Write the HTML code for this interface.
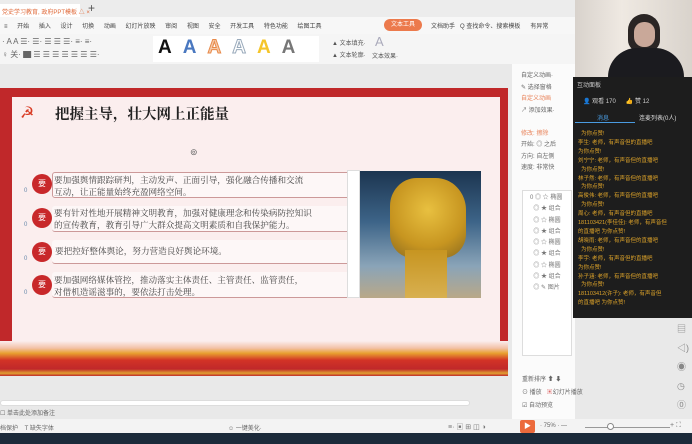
<!DOCTYPE html>
<html><head><meta charset="utf-8"><style>
*{margin:0;padding:0;box-sizing:border-box}
body{width:692px;height:444px;overflow:hidden;background:#e9e9e9;font-family:"Liberation Sans","Noto Sans CJK SC",sans-serif;position:relative;font-size:7px;color:#444}
.a{position:absolute}
.t{white-space:nowrap}
</style></head><body>
<!-- title bar -->
<div class="a" style="left:0;top:0;width:575px;height:17px;background:#ececec"></div>
<div class="a t" style="left:0;top:4px;color:#e06a3a;font-size:6px;background:#fff;width:80px;height:13px;padding:3px 2px">党史学习教育, 政府PPT模板 △ ×</div>
<div class="a t" style="left:88px;top:1px;font-size:12px;color:#555">+</div>
<!-- menu -->
<div class="a" style="left:0;top:17px;width:575px;height:17px;background:#f7f7f7"></div>
<div class="a t" style="left:4px;top:21px;font-size:6px;color:#444;word-spacing:8px">≡ 开始 插入 设计 切换 动画 幻灯片放映 审阅 视图 安全 开发工具 特色功能 绘图工具</div>
<div class="a t" style="left:384px;top:19px;width:38px;height:12px;border-radius:6px;background:#ec7a4c;color:#fff;font-size:6px;text-align:center;line-height:12px">文本工具</div>
<div class="a t" style="left:431px;top:21px;font-size:6px;color:#444">文档助手 &nbsp;&nbsp;Q 查找命令、搜索模板 &nbsp;&nbsp;&nbsp;&nbsp;&nbsp;有异常</div>
<!-- ribbon -->
<div class="a" style="left:0;top:34px;width:575px;height:30px;background:#f5f5f5"></div>
<div class="a t" style="left:2px;top:37px;font-size:8px;color:#666">· A A ☰· ☰· ☰ ☰ ☰· ≡· ≡·</div>
<div class="a t" style="left:2px;top:49px;font-size:8px;color:#666">♀ 关· ▇ ☰ ☰ ☰ ☰ ☰ ☰ ☰·</div>
<div class="a" style="left:153px;top:36px;width:166px;height:26px;background:#fff"></div>
<div class="a t" style="left:158px;top:37px;font-size:19px;font-weight:bold;letter-spacing:11px"><span style="color:#111">A</span><span style="color:#4a78c0">A</span><span style="color:#f5c9a8;-webkit-text-stroke:1px #e88a4a">A</span><span style="color:#fff;-webkit-text-stroke:1px #9ab">A</span><span style="color:#f5c52a">A</span><span style="color:#777">A</span></div>
<div class="a t" style="left:332px;top:38px;font-size:6px;color:#555;line-height:12px">▲ 文本填充·<br>▲ 文本轮廓·</div>
<div class="a t" style="left:375px;top:34px;font-size:13px;color:#aab">A</div>
<div class="a t" style="left:372px;top:51px;font-size:6px;color:#555">文本效果·</div>
<!-- right panel -->
<div class="a" style="left:512px;top:64px;width:63px;height:356px;background:#fbfbfb"></div>
<div class="a t" style="left:521px;top:71px;font-size:6px;color:#666;line-height:11.5px">自定义动画·<br>✎ 选择窗格<br><span style="color:#e8835a">自定义动画</span><br>↗ 添加效果·<br><br><span style="color:#e8835a">修改: 擦除</span><br>开始: ◎ 之后<br>方向: 自左侧<br>速度: 非常快</div>
<div class="a" style="left:522px;top:190px;width:50px;height:166px;background:#fff;border:1px solid #ddd"></div>
<div class="a t" style="left:530px;top:193px;font-size:6px;color:#777;line-height:11.3px">0 ◎ ☆ 椭圆<br>&nbsp; ◎ ★ 组合<br>&nbsp; ◎ ☆ 椭圆<br>&nbsp; ◎ ★ 组合<br>&nbsp; ◎ ☆ 椭圆<br>&nbsp; ◎ ★ 组合<br>&nbsp; ◎ ☆ 椭圆<br>&nbsp; ◎ ★ 组合<br>&nbsp; ◎ ✎ 图片</div>
<div class="a t" style="left:522px;top:374px;font-size:6px;color:#666;line-height:13px">重新排序 ⬆ ⬇<br>⊙ 播放 &nbsp;&nbsp;<span style="color:#d66">▣</span>幻灯片播放<br>☑ 自动预览</div>
<!-- webcam -->
<div class="a" style="left:575px;top:0;width:117px;height:77px;background:linear-gradient(90deg,#d8d2cc,#efe9e2 40%,#d9d3cc)"></div>
<div class="a" style="left:628px;top:14px;width:32px;height:38px;border-radius:16px 16px 12px 12px;background:#2a2524"></div>
<div class="a" style="left:634px;top:22px;width:21px;height:25px;border-radius:10px;background:#c9a899"></div>
<div class="a" style="left:608px;top:48px;width:76px;height:29px;border-radius:30px 30px 0 0;background:#1b1b1f"></div>
<!-- chat -->
<div class="a" style="left:573px;top:77px;width:119px;height:241px;background:#1d1d1d"></div>
<div class="a t" style="left:577px;top:80px;font-size:6px;color:#ccc">互动面板</div>
<div class="a t" style="left:583px;top:96px;font-size:6px;color:#ccc">👤 观看 170 &nbsp;&nbsp;&nbsp;&nbsp;&nbsp;👍 赞 12</div>
<div class="a t" style="left:597px;top:113px;font-size:6px;color:#4a9be0">消息</div>
<div class="a" style="left:575px;top:122px;width:60px;height:1px;background:#4a9be0"></div>
<div class="a t" style="left:639px;top:113px;font-size:6px;color:#ddd">连麦列表(0人)</div>
<div class="a t" style="left:578px;top:130px;font-size:5.5px;color:#e0a52a;line-height:8.9px">&nbsp; 为你点赞!<br>李生: 老师，有声音但的直播吧<br>为你点赞!<br>刘宁宁: 老师，有声音但的直播吧<br>&nbsp; 为你点赞!<br>林子然: 老师，有声音但的直播吧<br>&nbsp; 为你点赞!<br>高俊伟: 老师，有声音但的直播吧<br>&nbsp; 为你点赞!<br>周心: 老师，有声音但的直播吧<br>181103421(李佳佳): 老师，有声音但<br>的直播吧 为你点赞!<br>胡晓雨: 老师，有声音但的直播吧<br>&nbsp; 为你点赞!<br>李宇: 老师，有声音但的直播吧<br>为你点赞!<br>孙子涵: 老师，有声音但的直播吧<br>&nbsp; 为你点赞!<br>181103412(许子): 老师，有声音但<br>的直播吧 为你点赞!</div>
<!-- right icon column -->
<div class="a t" style="left:677px;top:320px;font-size:9px;color:#888;line-height:19px">▤<br>◁)<br>◉<br>◷<br>⓪</div>
<!-- slide -->
<div class="a" style="left:0;top:88px;width:508px;height:288px;background:#c0282a"></div>
<div class="a" style="left:12px;top:97px;width:488px;height:255px;background:#fbeeee"></div>
<div class="a" style="left:0;top:341px;width:508px;height:35px;background:linear-gradient(180deg,#fbeeee 0%,#f3c2a8 20%,#e8a030 35%,#d23326 55%,#c0282a 80%,#e0a030 92%,#c0282a 100%)"></div>
<div class="a t" style="left:20px;top:103px;font-size:16px;color:#d83a22">☭</div>
<div class="a t" style="left:55px;top:103px;font-size:14.5px;font-weight:bold;color:#222;font-family:'Liberation Serif','Noto Serif CJK SC',serif">把握主导，壮大网上正能量</div>
<div class="a t" style="left:190px;top:147px;font-size:9px;color:#666">⊚</div>
<!-- rows -->
<div class="a" style="left:52px;top:172px;width:300px;height:26px;border:1px solid #c99;border-radius:3px;background:#fdf7f7"></div>
<div class="a" style="left:52px;top:206px;width:300px;height:26px;border-bottom:1px solid #c99;border-radius:3px;background:#fdf7f7"></div>
<div class="a" style="left:52px;top:240px;width:300px;height:24px;border-bottom:1px solid #c99;border-radius:3px;background:#fdf7f7"></div>
<div class="a" style="left:52px;top:272px;width:300px;height:26px;border-bottom:1px solid #c99;border-radius:3px;background:#fdf7f7"></div>
<div class="a" style="left:32px;top:174px;width:20px;height:20px;border-radius:50%;background:#c8282a;color:#fff;font-size:8px;text-align:center;line-height:20px">要</div>
<div class="a" style="left:32px;top:208px;width:20px;height:20px;border-radius:50%;background:#c8282a;color:#fff;font-size:8px;text-align:center;line-height:20px">要</div>
<div class="a" style="left:32px;top:242px;width:20px;height:20px;border-radius:50%;background:#c8282a;color:#fff;font-size:8px;text-align:center;line-height:20px">要</div>
<div class="a" style="left:32px;top:275px;width:20px;height:20px;border-radius:50%;background:#c8282a;color:#fff;font-size:8px;text-align:center;line-height:20px">要</div>
<div class="a t" style="left:24px;top:174px;font-size:6px;color:#68a;line-height:34px">0<br>0<br>0<br>0</div>
<div class="a t" style="left:54px;top:174px;font-size:8.6px;color:#444;line-height:12px;font-family:'Liberation Serif','Noto Serif CJK SC',serif">要加强舆情跟踪研判，主动发声、正面引导，强化融合传播和交流<br>互动，让正能量始终充盈网络空间。</div>
<div class="a t" style="left:54px;top:207px;font-size:8.6px;color:#444;line-height:12px;font-family:'Liberation Serif','Noto Serif CJK SC',serif">要有针对性地开展精神文明教育，加强对健康理念和传染病防控知识<br>的宣传教育，教育引导广大群众提高文明素质和自我保护能力。</div>
<div class="a t" style="left:55px;top:245px;font-size:8.6px;color:#444;font-family:'Liberation Serif','Noto Serif CJK SC',serif">要把控好整体舆论，努力营造良好舆论环境。</div>
<div class="a t" style="left:54px;top:274px;font-size:8.6px;color:#444;line-height:12px;font-family:'Liberation Serif','Noto Serif CJK SC',serif">要加强网络媒体管控，推动落实主体责任、主管责任、监管责任，<br>对借机造谣滋事的，要依法打击处理。</div>
<div class="a" style="left:347px;top:170px;width:13px;height:128px;background:#fff;border:1px solid #ddd"></div>
<!-- fist image -->
<div class="a" style="left:360px;top:171px;width:121px;height:127px;background:linear-gradient(180deg,#1c3550 0%,#3d6488 40%,#8aa4b8 75%,#b9a888 100%)"></div>
<div class="a" style="left:390px;top:178px;width:76px;height:80px;border-radius:35% 40% 30% 30%;background:radial-gradient(circle at 50% 40%,#e8c040,#c79520 60%,#8a6a20)"></div>
<div class="a" style="left:405px;top:250px;width:42px;height:48px;background:linear-gradient(180deg,#c79520,#d8b050)"></div>
<!-- bottom -->
<div class="a" style="left:0;top:400px;width:470px;height:6px;background:#fff;border:1px solid #ddd;border-radius:3px"></div>
<div class="a t" style="left:0;top:408px;font-size:6px;color:#666">☐ 单击此处添加备注</div>
<div class="a" style="left:0;top:419px;width:692px;height:14px;background:#f3f3f3"></div>
<div class="a t" style="left:0;top:423px;font-size:6px;color:#666">档保护 &nbsp;&nbsp;&nbsp;T 缺失字体</div>
<div class="a t" style="left:228px;top:423px;font-size:6px;color:#666">☺ 一键美化·</div>
<div class="a t" style="left:448px;top:422px;font-size:7px;color:#777">≡· ▣ ⊞ ◫ ◑</div>
<div class="a" style="left:520px;top:420px;width:15px;height:13px;background:#ec6a3c;border-radius:2px;color:#fff;font-size:7px;text-align:center;line-height:13px">▶</div>
<div class="a t" style="left:540px;top:423px;font-size:6px;color:#666">· 75% · —</div>
<div class="a" style="left:585px;top:427px;width:85px;height:1px;background:#999"></div>
<div class="a" style="left:607px;top:423px;width:7px;height:7px;border:1px solid #888;border-radius:50%;background:#fff"></div>
<div class="a t" style="left:670px;top:422px;font-size:7px;color:#777">+ ⛶</div>
<div class="a" style="left:0;top:433px;width:692px;height:11px;background:#1c2a3a"></div>
</body></html>
